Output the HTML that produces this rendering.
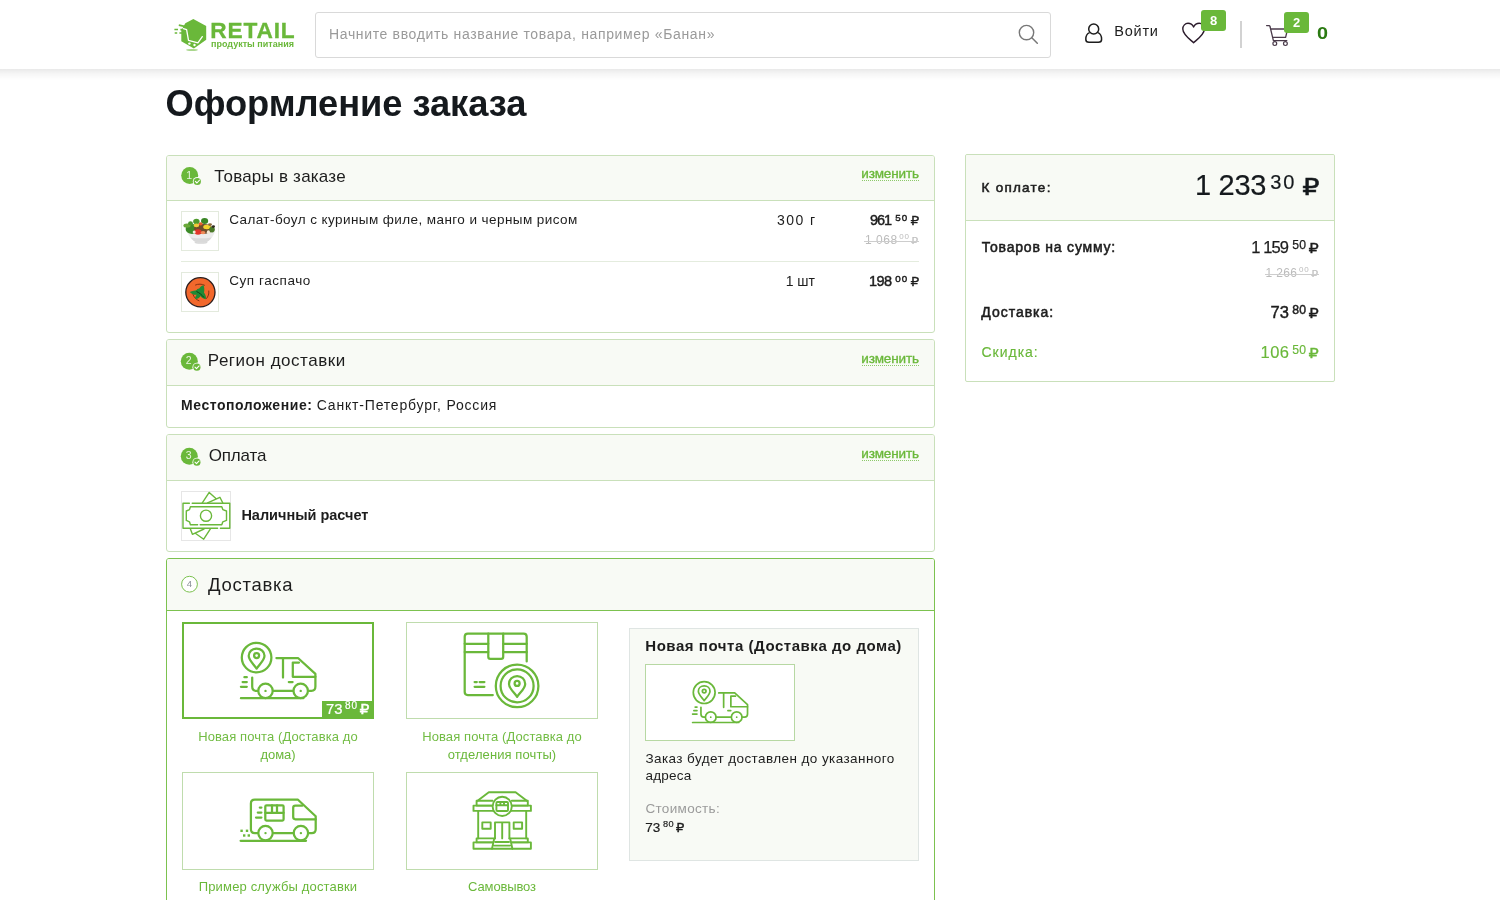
<!DOCTYPE html><html lang="ru"><head><meta charset="utf-8"><title>Оформление заказа</title><style>
*{box-sizing:border-box;margin:0;padding:0}
html,body{width:1500px;height:900px;overflow:hidden;background:#fff}
body{will-change:transform;position:relative;font-family:"Liberation Sans","DejaVu Sans",sans-serif;color:#1d1d1d}
.t{position:absolute;white-space:nowrap}
.abs{position:absolute}
svg{position:absolute;overflow:visible}
.pr{display:block;text-align:right}
.pr span{line-height:0}
.pr .c{position:relative;font-weight:inherit}
.pr .r{font-family:"DejaVu Sans",sans-serif;font-weight:normal;display:inline-block;transform-origin:100% 50%}
.strike .n,.strike .c,.strike .r{text-decoration:none}
.box{position:absolute;border:1px solid #c9e0ba;border-radius:3px;background:#fff}
.hd{position:absolute;left:0;top:0;right:0;background:#f8faf5;border-bottom:1px solid #c9e0ba;border-radius:2px 2px 0 0}
.thumb{position:absolute;border:1px solid #e3eadd;background:#fff}
.tile{position:absolute;border:1px solid #bfdcad;background:#fff}
.badge{position:absolute;background:#6ab83a;border-radius:3px;color:#fff;font-weight:bold;text-align:center}
.chg{}
.ul{position:absolute;height:0;border-top:1px dotted rgba(106,184,58,.75)}
</style></head><body>
<header class="abs" style="left:0;top:0;width:1500px;height:69px;background:#fff"></header><div class="abs" style="left:0;top:69px;width:1500px;height:11px;background:linear-gradient(to bottom,rgba(0,0,0,.085),rgba(0,0,0,.035) 45%,rgba(0,0,0,0))"></div>
<svg style="left:170px;top:10px" width="80" height="50" viewBox="170 10 80 50">
<ellipse cx="192" cy="50" rx="6" ry="0.9" fill="#a9d68c"/>
<path d="M193.3 19 L206.2 26 L206.2 39.8 L193.9 48.4 L181.3 41.2 L181.3 30.5 L185.3 23.3 Z" fill="#6ab83a"/>
<path d="M178.8 25.2 L186.9 26.8 M174.4 29.5 H178 M180.4 29.7 H184.6 M174.7 33 H177.2 M179.4 33 H184" stroke="#6ab83a" stroke-width="1.7" fill="none"/>
<path d="M183.4 28.6 L186.6 29.6 L188.5 40.3 L197.9 42.8 L202.3 36.6" stroke="#fff" stroke-width="1.3" fill="none" stroke-linecap="round" stroke-linejoin="round"/>
<circle cx="189.4" cy="43.6" r="1.2" fill="#fff"/><circle cx="194.5" cy="45" r="1.2" fill="#fff"/>
</svg>
<div class="t " style="top:15.00px;font-size:22.7px;line-height:30px;color:#6ab83a;letter-spacing:0.84px;font-weight:bold;-webkit-text-stroke-width:0.3px;left:210.3px;">RETAIL</div>
<div class="t " style="top:37.00px;font-size:9px;line-height:14px;color:#6ab83a;letter-spacing:0.01px;font-weight:bold;left:211px;">продукты питания</div>
<div class="abs" style="left:315px;top:12px;width:736px;height:46px;border:1px solid #d9d9d9;border-radius:3px;background:#fff"></div>
<div class="t " style="top:24.00px;font-size:14px;line-height:20px;color:#9a9a9a;letter-spacing:0.65px;left:329px;">Начните вводить название товара, например «Банан»</div>
<svg style="left:1015px;top:22px" width="26" height="26" viewBox="1015 22 26 26"><circle cx="1026.5" cy="32.6" r="7.2" fill="none" stroke="#777" stroke-width="1.4"/><path d="M1031.8 37.8 L1037.3 43.3" stroke="#777" stroke-width="1.5" stroke-linecap="round"/></svg>
<svg style="left:1082px;top:20px" width="24" height="26" viewBox="1082 20 24 26"><circle cx="1093.7" cy="29" r="5" fill="none" stroke="#1d1d1d" stroke-width="1.5"/><path d="M1089.6 32.6 C1087 33.6 1085.8 36 1085.8 39.2 C1085.8 41.6 1087 42.3 1089 42.3 H1098.4 C1100.4 42.3 1101.6 41.6 1101.6 39.2 C1101.6 36 1100.4 33.6 1097.8 32.6" fill="none" stroke="#1d1d1d" stroke-width="1.5"/></svg>
<div class="t " style="top:21.00px;font-size:14.5px;line-height:20px;color:#1d1d1d;letter-spacing:0.76px;left:1114.3px;">Войти</div>
<svg style="left:1180px;top:20px" width="28" height="26" viewBox="1180 20 28 26"><path d="M1193.6 42.7 C1189 38.6 1182.8 34.2 1182.8 28.9 C1182.8 25.6 1185.2 23.3 1188 23.3 C1190.4 23.3 1192.4 24.6 1193.6 27 C1194.8 24.6 1196.8 23.3 1199.2 23.3 C1202 23.3 1204.4 25.6 1204.4 28.9 C1204.4 34.2 1198.2 38.6 1193.6 42.7 Z" fill="none" stroke="#2b1b2b" stroke-width="1.4" stroke-linejoin="round"/></svg>
<div class="badge" style="left:1201px;top:10px;width:25px;height:21px;font-size:13px;line-height:21px">8</div>
<div class="abs" style="left:1240px;top:21px;width:2px;height:27px;background:#d2d2d2"></div>
<svg style="left:1264px;top:22px" width="28" height="26" viewBox="1264 22 28 26"><path d="M1266.6 25.6 H1269 C1269.6 25.6 1269.9 25.9 1270 26.5 L1273.4 40.6 H1286.8 M1270.7 29 H1287.6 L1285.6 37.3 H1272.7" fill="none" stroke="#4a3a4a" stroke-width="1.3" stroke-linecap="round" stroke-linejoin="round"/><circle cx="1274.8" cy="43.6" r="1.9" fill="none" stroke="#4a3a4a" stroke-width="1.2"/><circle cx="1285.4" cy="43.6" r="1.9" fill="none" stroke="#4a3a4a" stroke-width="1.2"/></svg>
<div class="badge" style="left:1284px;top:12px;width:25px;height:21px;font-size:13px;line-height:21px">2</div>
<div class="t " style="top:22.00px;font-size:16.5px;line-height:22px;color:#2b7a12;font-weight:bold;left:1317px;transform:scaleX(1.2);transform-origin:0 50%;">0</div>
<div class="t " style="top:81.00px;font-size:36.3px;line-height:45px;color:#15191d;letter-spacing:-0.05px;font-weight:bold;left:165.5px;">Оформление заказа</div>
<div class="box" style="left:166px;top:155px;width:769px;height:178px"><div class="hd" style="height:45px"></div></div>
<svg style="left:179px;top:165px" width="24" height="24" viewBox="179 165 24 24"><circle cx="189.7" cy="175.5" r="8.5" fill="#6ab83a"/><circle cx="197.29999999999998" cy="181.5" r="4.5" fill="#f8faf5"/><circle cx="197.29999999999998" cy="181.5" r="3.6" fill="#6ab83a"/><path d="M195.39999999999998 181.4 l1.5 1.6 l2.6 -2.8" fill="none" stroke="#fff" stroke-width="1.1" stroke-linecap="round" stroke-linejoin="round"/></svg>
<div class="t " style="top:167.00px;font-size:10.5px;line-height:16px;color:#fff;left:-10.900000000000006px;width:400px;text-align:center;opacity:.85;">1</div>
<div class="t " style="top:165.00px;font-size:17px;line-height:23px;color:#1d1d1d;letter-spacing:0.22px;left:214.2px;">Товары в заказе</div>
<div class="t " style="top:164.00px;font-size:13.5px;line-height:19px;color:#6ab83a;letter-spacing:-0.15px;-webkit-text-stroke-width:0.35px;left:861.3px;"><span class="chg">изменить</span></div>
<div class="ul" style="left:862px;top:180px;width:57px"></div>
<div class="thumb" style="left:181px;top:211px;width:38px;height:40px"></div>
<svg style="left:182px;top:212px" width="36" height="38" viewBox="182 212 36 38">
<ellipse cx="201" cy="242.6" rx="6.6" ry="1.2" fill="#d6d6d6"/>
<path d="M186.8 231.2 C189.6 238 193.6 242.2 197.3 242.2 H205 C208.6 242.2 212.6 238 215.2 231.2 Z" fill="#ececec"/><path d="M190.6 237.4 C192.8 240.4 195.2 242.2 197.3 242.2 H205 C207.1 242.2 209.5 240.4 211.6 237.4 C205 238.6 197 238.6 190.6 237.4 Z" fill="#d9d9d9"/>
<ellipse cx="192" cy="229" rx="6.4" ry="5" fill="#3c8b28"/>
<ellipse cx="187" cy="225.6" rx="3.6" ry="2.2" fill="#6aa93a"/>
<ellipse cx="190.5" cy="223.2" rx="2.4" ry="2" fill="#4b972c"/>
<ellipse cx="196.4" cy="221.6" rx="3.2" ry="2.8" fill="#4f9a2d"/>
<ellipse cx="204.6" cy="221" rx="3.6" ry="3" fill="#3a8626"/>
<ellipse cx="203.4" cy="229" rx="9.6" ry="5" fill="#6e4d2c"/>
<ellipse cx="198" cy="232" rx="3.6" ry="2.8" fill="#e2352a"/>
<ellipse cx="207" cy="227" rx="3.8" ry="2.2" fill="#f4d32c"/>
<ellipse cx="196.4" cy="225.4" rx="2.8" ry="1.8" fill="#f1c838"/>
<ellipse cx="200.6" cy="223.8" rx="2" ry="1.6" fill="#ea5f2a"/>
<ellipse cx="203" cy="232.6" rx="2.4" ry="1.6" fill="#f18a58"/>
<ellipse cx="212" cy="229.6" rx="2.8" ry="2.8" fill="#4a7a28"/>
<ellipse cx="213.4" cy="226.6" rx="1.6" ry="1.4" fill="#2e2a1e"/>
<ellipse cx="208.4" cy="232.2" rx="1.6" ry="1.9" fill="#f3ead8"/>
<ellipse cx="194.2" cy="232" rx="1.5" ry="1.6" fill="#f3ead8"/>
<ellipse cx="210" cy="224.6" rx="2" ry="1.3" fill="#8a6a3a"/>
</svg>
<div class="t " style="top:210.00px;font-size:13.5px;line-height:19px;color:#1d1d1d;letter-spacing:0.42px;left:229.2px;">Салат-боул с куриным филе, манго и черным рисом</div>
<div class="t " style="top:210.00px;font-size:14px;line-height:20px;color:#1d1d1d;letter-spacing:1.41px;right:683.59px;text-align:right;">300 г</div>
<div class="t pr" style="top:210px;right:580.83px;font-size:14.5px;line-height:20px;color:#1d1d1d;-webkit-text-stroke-width:0.45px;"><span class="n" style="letter-spacing:-1.0px;margin-right:1.0px">961</span><span class="c" style="font-size:9.8px;margin-left:3.2px;top:-4.5px;letter-spacing:1.0px;margin-right:-1.0px">50</span><span class="r" style="font-size:13px;margin-left:3.70px;transform:scaleX(1.06);-webkit-text-stroke-width:0.3px">₽</span></div>
<div class="t pr" style="top:231px;right:581.52px;font-size:12px;line-height:18px;color:#bcbcbc;"><span class="n" style="letter-spacing:0.55px;margin-right:-0.55px">1 068</span><span class="c" style="font-size:8px;margin-left:2px;top:-5.3px;letter-spacing:0.8px;margin-right:-0.8px">00</span><span class="r" style="font-size:9.5px;margin-left:3.49px;transform:scaleX(1.18);-webkit-text-stroke-width:0.1px">₽</span></div>
<div class="abs" style="left:864px;top:241px;width:55px;height:1px;background:#cdcdcd"></div>
<div class="abs" style="left:181px;top:261px;width:738px;height:1px;background:#e4ecde"></div>
<div class="thumb" style="left:181px;top:272px;width:38px;height:40px"></div>
<svg style="left:182px;top:273px" width="36" height="38" viewBox="182 273 36 38">
<circle cx="200.400" cy="292.300" r="14.600" fill="#f2682c" stroke="#2a1c1c" stroke-width="1.300"/>
<path d="M195.500 285 C198 283.800 202 283.800 204.500 285.200 M192.800 294 C194 297.500 196 299.500 199 300.800 M208.800 291 C209.200 294 208.200 296.500 206.500 298.500" fill="none" stroke="#7a2c10" stroke-width="0.900" stroke-linecap="round"/>
<path d="M189.8 292 C192.4 290.4 195.4 291.2 196.6 290 C197.6 288.4 199.2 289 199.8 287.8 C200.8 285.800 202.4 285.800 203.400 285 C204.400 287.400 204.600 290.200 204 292.400 C205.600 294.600 206.400 297 205.800 299.200 C203.200 299 201.600 297.600 200.600 296 C199.400 298.200 197.200 299.200 195 299 C195.300 297 195.900 295.900 196.700 294.800 C194 295 191.600 294 189.800 292 Z" fill="#1f8a35"/>
<path d="M196.500 291.500 C199 292.500 202 295 204 297.500" stroke="#0c3d18" stroke-width="1" fill="none"/>
</svg>
<div class="t " style="top:271.00px;font-size:13.5px;line-height:19px;color:#1d1d1d;letter-spacing:0.56px;left:229.2px;">Суп гаспачо</div>
<div class="t " style="top:271.00px;font-size:14px;line-height:20px;color:#1d1d1d;letter-spacing:-0.01px;right:685.01px;text-align:right;">1 шт</div>
<div class="t pr" style="top:271px;right:580.83px;font-size:14.5px;line-height:20px;color:#1d1d1d;-webkit-text-stroke-width:0.45px;"><span class="n" style="letter-spacing:-0.6px;margin-right:0.6px">198</span><span class="c" style="font-size:9.8px;margin-left:3.2px;top:-4.5px;letter-spacing:1.0px;margin-right:-1.0px">00</span><span class="r" style="font-size:13px;margin-left:3.70px;transform:scaleX(1.06);-webkit-text-stroke-width:0.3px">₽</span></div>
<div class="box" style="left:166px;top:339px;width:769px;height:89px"><div class="hd" style="height:46px"></div></div>
<svg style="left:179px;top:351px" width="24" height="24" viewBox="179 351 24 24"><circle cx="189.3" cy="361.2" r="8.5" fill="#6ab83a"/><circle cx="196.9" cy="367.2" r="4.5" fill="#f8faf5"/><circle cx="196.9" cy="367.2" r="3.6" fill="#6ab83a"/><path d="M195.0 367.09999999999997 l1.5 1.6 l2.6 -2.8" fill="none" stroke="#fff" stroke-width="1.1" stroke-linecap="round" stroke-linejoin="round"/></svg>
<div class="t " style="top:352.00px;font-size:10.5px;line-height:16px;color:#fff;left:-11.299999999999983px;width:400px;text-align:center;opacity:.85;">2</div>
<div class="t " style="top:349.00px;font-size:17px;line-height:23px;color:#1d1d1d;letter-spacing:0.51px;left:207.8px;">Регион доставки</div>
<div class="t " style="top:349.00px;font-size:13.5px;line-height:19px;color:#6ab83a;letter-spacing:-0.15px;-webkit-text-stroke-width:0.35px;left:861.3px;"><span class="chg">изменить</span></div>
<div class="ul" style="left:862px;top:365px;width:57px"></div>
<div class="t " style="top:395.00px;font-size:14px;line-height:20px;color:#1d1d1d;letter-spacing:0.56px;font-weight:bold;left:181px;">Местоположение:</div>
<div class="t " style="top:395.00px;font-size:14px;line-height:20px;color:#1d1d1d;letter-spacing:0.81px;left:316.8px;">Санкт-Петербург, Россия</div>
<div class="box" style="left:166px;top:434px;width:769px;height:118px"><div class="hd" style="height:46px"></div></div>
<svg style="left:179px;top:446px" width="24" height="24" viewBox="179 446 24 24"><circle cx="189.3" cy="456.2" r="8.5" fill="#6ab83a"/><circle cx="196.9" cy="462.2" r="4.5" fill="#f8faf5"/><circle cx="196.9" cy="462.2" r="3.6" fill="#6ab83a"/><path d="M195.0 462.09999999999997 l1.5 1.6 l2.6 -2.8" fill="none" stroke="#fff" stroke-width="1.1" stroke-linecap="round" stroke-linejoin="round"/></svg>
<div class="t " style="top:447.00px;font-size:10.5px;line-height:16px;color:#fff;left:-11.299999999999983px;width:400px;text-align:center;opacity:.85;">3</div>
<div class="t " style="top:444.00px;font-size:17px;line-height:23px;color:#1d1d1d;letter-spacing:-0.15px;left:208.7px;">Оплата</div>
<div class="t " style="top:444.00px;font-size:13.5px;line-height:19px;color:#6ab83a;letter-spacing:-0.15px;-webkit-text-stroke-width:0.35px;left:861.3px;"><span class="chg">изменить</span></div>
<div class="ul" style="left:862px;top:460px;width:57px"></div>
<div class="abs" style="left:181px;top:491px;width:50px;height:50px;border:1px solid #e6e6e6;background:#fff"></div>
<svg style="left:181px;top:491px" width="50" height="50" viewBox="181 491 50 50"><g fill="none" stroke="#6ab83a" stroke-width="1.4" stroke-linejoin="round" stroke-linecap="round">
<path d="M189.400 503.300 H183 V528.300 H217.600 M220.400 528.300 H229.800 V503.300 H192.200"/>
<path d="M197.600 524.800 H190.400 L189.500 521.800 L186.300 520.400 V511 L189.500 509.600 L190.400 506.700 H221.800 L222.800 509.600 L226.500 511 V520.400 L222.800 521.800 L221.800 524.800 H200.200"/>
<circle cx="206" cy="515.700" r="5.600"/>
<path d="M202.300 502.800 L209.200 492.400 L216.200 498.800 M207.600 502.800 L219.900 497.300 L222.700 502.800"/>
<path d="M190.400 528.900 L192.400 534.300 L204 529 M196 533.800 L203.700 539.200 L210.400 528.900"/>
</g></svg>
<div class="t " style="top:505.00px;font-size:14.5px;line-height:20px;color:#1d1d1d;letter-spacing:-0.01px;font-weight:bold;left:241.4px;">Наличный расчет</div>
<div class="abs" style="left:166px;top:558px;width:769px;height:360px;border:1px solid #7cc24f;border-radius:3px;background:#fff"><div class="hd" style="height:52px;border-bottom:1px solid #7cc24f"></div></div>
<svg style="left:180px;top:575px" width="20" height="20" viewBox="180 575 20 20"><circle cx="189.500" cy="584.200" r="7.900" fill="#fff" stroke="#7cc24f" stroke-width="1"/></svg>
<div class="t " style="top:576.00px;font-size:9.5px;line-height:15px;color:#8a8f99;left:-10.599999999999994px;width:400px;text-align:center;">4</div>
<div class="t " style="top:572.00px;font-size:18.5px;line-height:25px;color:#1d1d1d;letter-spacing:0.71px;left:208px;">Доставка</div>
<div class="tile" style="left:182px;top:622px;width:192px;height:97px;border:2px solid #6ab83a"></div>
<svg style="left:182px;top:622px" width="192" height="97" viewBox="182 622 192 97"><g fill="none" stroke="#6ab83a" stroke-width="2.25" stroke-linecap="round" stroke-linejoin="round">
<circle cx="256.600" cy="657.600" r="14.800"/>
<path d="M256.600 668.600 C253.600 664.200 248.700 660.200 248.700 655.800 C248.700 651.600 252.200 648.600 256.600 648.600 C261 648.600 264.500 651.600 264.500 655.800 C264.500 660.200 259.600 664.200 256.600 668.600 Z"/>
<circle cx="256.600" cy="655.600" r="2.500"/>
<path d="M276.400 658 H298 L315.400 673.800 V686.600 C315.400 689.400 314 690.900 311.400 690.900 H308.400"/>
<path d="M283 658 V677.600"/>
<path d="M315.400 676.800 H292.800 V662.500 H299"/>
<path d="M288.800 682 H292.600"/>
<path d="M252.200 677.600 V686.600 C252.200 689.400 253.600 690.900 256.200 690.900 H257.800"/>
<circle cx="265.500" cy="690.900" r="7.200"/><circle cx="300.700" cy="690.900" r="7.200"/>
<path d="M273 690.900 H293"/>
<path d="M244.400 677.200 H246.800 M242.600 682 H246.800 M240.900 686.800 H246.800"/>
<path d="M240.900 698.200 H303.400"/>
</g><circle cx="265.500" cy="690.900" r="1.200" fill="#6ab83a"/><circle cx="300.700" cy="690.900" r="1.200" fill="#6ab83a"/></svg>
<div class="abs" style="left:322px;top:701px;width:52px;height:18px;background:#6ab83a"></div>
<div class="t pr" style="top:699px;right:1130.67px;font-size:14.8px;line-height:20px;color:#fff;-webkit-text-stroke-width:0.2px;"><span class="n" style="letter-spacing:0.1px;margin-right:-0.1px">73</span><span class="c" style="font-size:10px;margin-left:2.6px;top:-5.2px;letter-spacing:0.9px;margin-right:-0.9px">80</span><span class="r" style="font-size:13.3px;margin-left:3.72px;transform:scaleX(1.18);-webkit-text-stroke-width:0.3px">₽</span></div>
<div class="t " style="top:727.00px;font-size:13px;line-height:19px;color:#72bc44;letter-spacing:0.10px;left:78px;width:400px;text-align:center;">Новая почта (Доставка до</div>
<div class="t " style="top:745.00px;font-size:13px;line-height:19px;color:#6ab83a;letter-spacing:-0.07px;left:78px;width:400px;text-align:center;">дома)</div>
<div class="tile" style="left:406px;top:622px;width:192px;height:97px"></div>
<svg style="left:406px;top:622px" width="192" height="97" viewBox="406 622 192 97"><g fill="none" stroke="#6ab83a" stroke-width="2.25" stroke-linecap="round" stroke-linejoin="round">
<path d="M492.800 695 H467.800 C465.700 695 464.700 694 464.700 692 V636.700 C464.700 634.600 465.700 633.600 467.800 633.600 H523.600 C525.600 633.600 526.700 634.600 526.700 636.700 V661.400"/>
<path d="M464.700 643.800 H488.300 M503.200 643.800 H526.700 M464.700 652.100 H488.300 M503.200 652.100 H526.700"/>
<path d="M488.300 633.600 V656.800 C488.300 658.200 489 658.900 490.400 658.900 H501.100 C502.500 658.900 503.200 658.200 503.200 656.800 V633.600"/>
<path d="M474.600 682 H476.800 M479.600 682 H484.400 M474.600 686.800 H484.400"/>
<circle cx="517.100" cy="685.900" r="21.300"/><circle cx="517.100" cy="685.900" r="16.500"/>
<path d="M517.100 696.800 C514.100 692.400 509 688.400 509 683.900 C509 679.500 512.600 676 517.100 676 C521.600 676 525.200 679.500 525.200 683.900 C525.200 688.400 520.100 692.400 517.100 696.800 Z"/>
<circle cx="517.100" cy="683.400" r="2.500"/>
</g></svg>
<div class="t " style="top:727.00px;font-size:13px;line-height:19px;color:#72bc44;letter-spacing:0.10px;left:302px;width:400px;text-align:center;">Новая почта (Доставка до</div>
<div class="t " style="top:745.00px;font-size:13px;line-height:19px;color:#6ab83a;letter-spacing:0.09px;left:302px;width:400px;text-align:center;">отделения почты)</div>
<div class="tile" style="left:182px;top:772px;width:192px;height:98px"></div>
<svg style="left:182px;top:772px" width="192" height="98" viewBox="182 772 192 98"><g fill="none" stroke="#6ab83a" stroke-width="2.25" stroke-linecap="round" stroke-linejoin="round">
<path d="M257.600 833.100 H254.800 C252.200 833.100 250.900 831.800 250.900 829.200 V803.600 C250.900 801 252.200 799.700 254.800 799.700 H298 L315.700 816.200 V829.200 C315.700 831.800 314.400 833.100 311.800 833.100 H308.800"/>
<path d="M315.700 819.300 H295.400 C293.900 819.300 293.200 818.600 293.200 817.100 V807.800 C293.200 806.300 293.900 805.600 295.400 805.600 H302.500"/>
<rect x="265.300" y="805.300" width="18.300" height="15.200" rx="1.200"/>
<path d="M265.300 812.800 H283.600 M272 805.300 V812.800 M277 805.300 V812.800"/>
<path d="M259.800 807.500 H261.400 M257.800 812.500 H261.400 M256 817.600 H261.400"/>
<circle cx="265.500" cy="833.100" r="7.200"/><circle cx="300.900" cy="833.100" r="7.200"/>
<path d="M273.200 833.100 H293.200"/>
<path d="M240.600 840.800 H306"/>
</g><g fill="#6ab83a"><circle cx="265.500" cy="833.100" r="1.200"/><circle cx="300.900" cy="833.100" r="1.200"/>
<rect x="240.400" y="829.600" width="2.4" height="2.4"/><rect x="245.800" y="829.600" width="2.4" height="2.4"/><rect x="243" y="834.300" width="2.4" height="2.4"/><rect x="247.600" y="834.300" width="2.4" height="2.4"/></g></svg>
<div class="t " style="top:877.00px;font-size:13px;line-height:19px;color:#6ab83a;letter-spacing:0.16px;left:78px;width:400px;text-align:center;">Пример службы доставки</div>
<div class="tile" style="left:406px;top:772px;width:192px;height:98px"></div>
<svg style="left:406px;top:772px" width="192" height="98" viewBox="406 772 192 98"><g fill="none" stroke="#6ab83a" stroke-width="1.9" stroke-linecap="round" stroke-linejoin="round">
<path d="M477.600 800.800 L488.800 792.200 H515.600 L526.800 800.800"/>
<path d="M492.600 800.800 H476.600 V805.600 H492.200 M512.200 805.600 H527.800 V800.800 H511.800"/>
<path d="M492.400 805.600 H473.500 V810.900 H493.400 M511 810.900 H530.900 V805.600 H512"/>
<circle cx="502.200" cy="806.400" r="9.600"/>
<rect x="496.400" y="802" width="11.600" height="9" rx="1"/>
<path d="M496.400 805.200 H508 M500.400 802 V805.200 M504 802 V805.200"/>
<path d="M478.200 810.900 V838.400 M526.200 810.900 V838.400"/>
<rect x="482.300" y="822.400" width="8.400" height="6.400"/><rect x="513.700" y="822.400" width="8.400" height="6.400"/>
<path d="M495 838.400 V822.400 H509.400 V838.400 M502.200 822.400 V838.400"/>
<path d="M495 838.400 H476.600 V842.400 H492.800 M509.400 838.400 H527.800 V842.400 H511.600"/>
<path d="M492.400 842.400 H473.500 V848.700 H530.900 V842.400 H512"/>
<path d="M492 848.700 L494.200 838.600 M512.400 848.700 L510.200 838.600 M495.400 842 H509 M494.400 845.600 H510"/>
</g></svg>
<div class="t " style="top:877.00px;font-size:13px;line-height:19px;color:#6ab83a;letter-spacing:-0.13px;left:302px;width:400px;text-align:center;">Самовывоз</div>
<div class="abs" style="left:629px;top:628px;width:290px;height:233px;background:#f8faf5;border:1px solid #dfe5e3"></div>
<div class="t " style="top:635.00px;font-size:15px;line-height:21px;color:#1d1d1d;letter-spacing:0.54px;font-weight:bold;left:645.3px;">Новая почта (Доставка до дома)</div>
<div class="tile" style="left:645px;top:664px;width:150px;height:77px;border-color:#b7d8a3"></div>
<svg style="left:645px;top:664px" width="150" height="77" viewBox="645 664 150 77"><g transform="translate(692.1 681.1) scale(0.737) translate(-240.2 -642)"><g fill="none" stroke="#6ab83a" stroke-width="2.3" stroke-linecap="round" stroke-linejoin="round">
<circle cx="256.600" cy="657.600" r="14.800"/>
<path d="M256.600 668.600 C253.600 664.200 248.700 660.200 248.700 655.800 C248.700 651.600 252.200 648.600 256.600 648.600 C261 648.600 264.500 651.600 264.500 655.800 C264.500 660.200 259.600 664.200 256.600 668.600 Z"/>
<circle cx="256.600" cy="655.600" r="2.500"/>
<path d="M276.400 658 H298 L315.400 673.800 V686.600 C315.400 689.400 314 690.900 311.400 690.900 H308.400"/>
<path d="M283 658 V677.600"/>
<path d="M315.400 676.800 H292.800 V662.500 H299"/>
<path d="M288.800 682 H292.600"/>
<path d="M252.200 677.600 V686.600 C252.200 689.400 253.600 690.900 256.200 690.900 H257.800"/>
<circle cx="265.500" cy="690.900" r="7.200"/><circle cx="300.700" cy="690.900" r="7.200"/>
<path d="M273 690.900 H293"/>
<path d="M244.400 677.200 H246.800 M242.600 682 H246.800 M240.900 686.800 H246.800"/>
<path d="M240.900 698.200 H303.400"/>
</g><circle cx="265.500" cy="690.900" r="1.200" fill="#6ab83a"/><circle cx="300.700" cy="690.900" r="1.200" fill="#6ab83a"/></g></svg>
<div class="t " style="top:749.00px;font-size:13.5px;line-height:19px;color:#1d1d1d;letter-spacing:0.42px;left:645.4px;">Заказ будет доставлен до указанного</div>
<div class="t " style="top:766.00px;font-size:13.5px;line-height:19px;color:#1d1d1d;letter-spacing:0.24px;left:645.4px;">адреса</div>
<div class="t " style="top:799.00px;font-size:13.5px;line-height:19px;color:#9b9b9b;letter-spacing:0.33px;left:645.4px;">Стоимость:</div>
<div class="t pr" style="top:818px;right:815.64px;font-size:13.5px;line-height:19px;color:#1d1d1d;-webkit-text-stroke-width:0.2px;"><span class="n" style="letter-spacing:0.2px;margin-right:-0.2px">73</span><span class="c" style="font-size:9.2px;margin-left:2.5px;top:-4.8px;letter-spacing:0.4px;margin-right:-0.4px">80</span><span class="r" style="font-size:11.5px;margin-left:3.52px;transform:scaleX(1.18);-webkit-text-stroke-width:0.3px">₽</span></div>
<div class="box" style="left:965px;top:154px;width:370px;height:228px;border-radius:2px"><div class="hd" style="height:66px"></div></div>
<div class="t " style="top:178.00px;font-size:13.5px;line-height:19px;color:#1d1d1d;letter-spacing:1.26px;-webkit-text-stroke-width:0.55px;left:981.5px;">К оплате:</div>
<div class="t pr" style="top:167px;right:179.88px;font-size:29px;line-height:36px;color:#15191d;-webkit-text-stroke-width:0.2px;"><span class="n" style="letter-spacing:-0.3px;margin-right:0.3px">1 233</span><span class="c" style="font-size:20px;margin-left:3.9px;top:-5.8px;letter-spacing:1.8px;margin-right:-1.8px">30</span><span class="r" style="font-size:23px;margin-left:11.13px;transform:scaleX(1.18);-webkit-text-stroke-width:0.5px">₽</span></div>
<div class="t " style="top:237.00px;font-size:14px;line-height:20px;color:#1d1d1d;letter-spacing:0.79px;-webkit-text-stroke-width:0.55px;left:981.8px;">Товаров на сумму:</div>
<div class="t pr" style="top:236px;right:181.55px;font-size:16.5px;line-height:22px;color:#1d1d1d;-webkit-text-stroke-width:0.25px;"><span class="n" style="letter-spacing:-0.9px;margin-right:0.9px">1 159</span><span class="c" style="font-size:12.2px;margin-left:3.2px;top:-4.5px;letter-spacing:0.2px;margin-right:-0.2px">50</span><span class="r" style="font-size:13.7px;margin-left:3.77px;transform:scaleX(1.18);-webkit-text-stroke-width:0.3px">₽</span></div>
<div class="t pr" style="top:264px;right:181.72px;font-size:12px;line-height:18px;color:#bcbcbc;"><span class="n" style="letter-spacing:0.4px;margin-right:-0.4px">1 266</span><span class="c" style="font-size:8px;margin-left:2px;top:-5.3px;letter-spacing:0.8px;margin-right:-0.8px">00</span><span class="r" style="font-size:9.5px;margin-left:3.49px;transform:scaleX(1.18);-webkit-text-stroke-width:0.1px">₽</span></div>
<div class="abs" style="left:1265px;top:274px;width:54px;height:1px;background:#cdcdcd"></div>
<div class="t " style="top:302.00px;font-size:14px;line-height:20px;color:#1d1d1d;letter-spacing:0.98px;-webkit-text-stroke-width:0.55px;left:981.3px;">Доставка:</div>
<div class="t pr" style="top:301px;right:181.55px;font-size:16.5px;line-height:22px;color:#1d1d1d;-webkit-text-stroke-width:0.45px;"><span class="n" style="letter-spacing:0.2px;margin-right:-0.2px">73</span><span class="c" style="font-size:12.2px;margin-left:3.2px;top:-4.5px;letter-spacing:0.2px;margin-right:-0.2px">80</span><span class="r" style="font-size:13.7px;margin-left:3.77px;transform:scaleX(1.18);-webkit-text-stroke-width:0.3px">₽</span></div>
<div class="t " style="top:342.00px;font-size:14px;line-height:20px;color:#6ab83a;letter-spacing:0.98px;-webkit-text-stroke-width:0.15px;left:981.5px;">Скидка:</div>
<div class="t pr" style="top:341px;right:181.55px;font-size:16.5px;line-height:22px;color:#6ab83a;-webkit-text-stroke-width:0.15px;"><span class="n" style="letter-spacing:0.5px;margin-right:-0.5px">106</span><span class="c" style="font-size:12.2px;margin-left:3.2px;top:-4.5px;letter-spacing:0.2px;margin-right:-0.2px">50</span><span class="r" style="font-size:13.7px;margin-left:3.77px;transform:scaleX(1.18);-webkit-text-stroke-width:0.3px">₽</span></div>
</body></html>
